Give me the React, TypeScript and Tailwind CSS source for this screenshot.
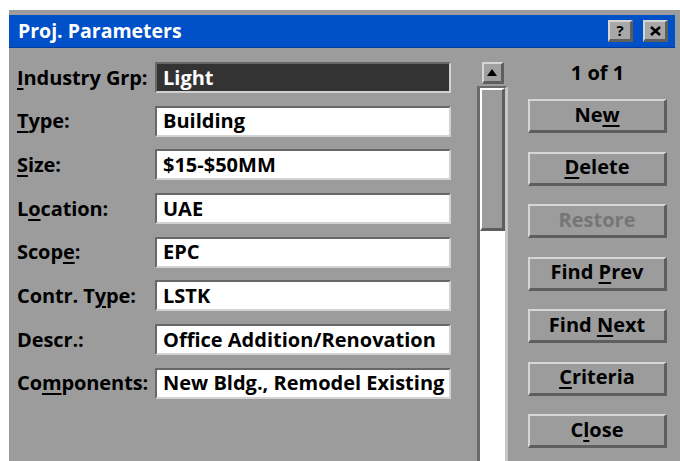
import React from "react";

const raised =
  "border-t-2 border-l-2 border-b-[3px] border-r-[3px] border-t-[#d6d6d6] border-l-[#d6d6d6] border-b-[#5e5e5e] border-r-[#5e5e5e]";

function Key({ children }: { children: React.ReactNode }) {
  return <span className="underline decoration-2 underline-offset-[3px]">{children}</span>;
}

type Row = { label: React.ReactNode; value: string; active?: boolean };

const rows: Row[] = [
  { label: <><Key>I</Key>ndustry Grp:</>, value: "Light", active: true },
  { label: <><Key>T</Key>ype:</>, value: "Building" },
  { label: <><Key>S</Key>ize:</>, value: "$15-$50MM" },
  { label: <>L<Key>o</Key>cation:</>, value: "UAE" },
  { label: <>Scop<Key>e</Key>:</>, value: "EPC" },
  { label: <>Contr. T<Key>y</Key>pe:</>, value: "LSTK" },
  { label: <>Descr.:</>, value: "Office Addition/Renovation" },
  { label: <>Co<Key>m</Key>ponents:</>, value: "New Bldg., Remodel Existing" },
];

const buttons: { label: React.ReactNode; disabled?: boolean }[] = [
  { label: <>Ne<Key>w</Key></> },
  { label: <><Key>D</Key>elete</> },
  { label: <>Restore</>, disabled: true },
  { label: <>Find <Key>P</Key>rev</> },
  { label: <>Find <Key>N</Key>ext</> },
  { label: <><Key>C</Key>riteria</> },
  { label: <>C<Key>l</Key>ose</> },
];

export default function App() {
  return (
    <div className="w-[680px] h-[461px] overflow-hidden bg-white pt-[10px] pl-[9px] font-['Open_Sans',sans-serif] font-bold">
      <div className="h-full bg-[#9c9c9c] pt-[5px] pr-[5px] flex flex-col">
        {/* title bar */}
        <div className="h-[33px] bg-[#0050c8] border-b border-[#003a9a] flex items-center pl-[9px] pr-[7px]">
          <span className="text-white text-[19.5px] leading-none">Proj. Parameters</span>
          <div className="ml-auto flex gap-[10px]">
            <div className={`w-[25px] h-[22px] bg-[#a8a8a8] ${raised} flex items-center justify-center text-[15px] leading-none text-black`}>
              ?
            </div>
            <div className={`w-[25px] h-[22px] bg-[#a8a8a8] ${raised} flex items-center justify-center`}>
              <svg width="11" height="10" viewBox="0 0 11 10">
                <path d="M1 1 L10 9 M10 1 L1 9" stroke="#000" strokeWidth="2.6" />
              </svg>
            </div>
          </div>
        </div>

        {/* body */}
        <div className="flex-1 flex pl-[3px] text-[20px] leading-none text-black">
          {/* labels and fields */}
          <div className="pt-[14px] flex flex-col gap-[12.7px]">
            {rows.map((r, i) => (
              <div key={i} className="flex items-center">
                <div className="w-[143px] pl-[5px] whitespace-nowrap tracking-[-0.1px]">{r.label}</div>
                <div
                  className={`w-[296px] h-[31px] border-2 border-t-[#686868] border-l-[#686868] border-b-[#d2d2d2] border-r-[#d2d2d2] flex items-center pl-[6px] whitespace-nowrap overflow-hidden ${
                    r.active ? "bg-[#333333] text-white" : "bg-white text-black"
                  }`}
                >
                  <span>{r.value}</span>
                </div>
              </div>
            ))}
          </div>

          {/* scroll bar */}
          <div className="ml-[26px] w-[31px] pt-[14px] flex flex-col items-center">
            <div className={`w-[22px] h-[22px] bg-[#a0a0a0] ${raised} flex items-center justify-center`}>
              <svg width="10" height="7" viewBox="0 0 10 7">
                <path d="M5 0 L10 7 L0 7 Z" fill="#000" />
              </svg>
            </div>
            <div className="mt-[2px] w-[31px] flex-1 border-l-[3px] border-t-[2px] border-r-[3px] border-[#6a6a6a] border-r-[#c6c6c6] bg-white">
              <div className={`w-[25px] h-[143px] bg-[#9c9c9c] ${raised} border-t-white border-l-white`} />
            </div>
          </div>

          {/* counter and buttons */}
          <div className="ml-[20px] w-[139px] flex flex-col">
            <div className="h-[51px] flex items-center justify-center pb-[1px]">
              <span>1 of 1</span>
            </div>
            <div className="flex flex-col gap-[18.5px]">
              {buttons.map((b, i) => (
                <div
                  key={i}
                  className={`h-[34px] bg-[#9c9c9c] ${raised} flex items-center justify-center pb-[2px] ${
                    b.disabled ? "text-[#767676]" : "text-black"
                  }`}
                >
                  <span>{b.label}</span>
                </div>
              ))}
            </div>
          </div>
        </div>
      </div>
    </div>
  );
}
